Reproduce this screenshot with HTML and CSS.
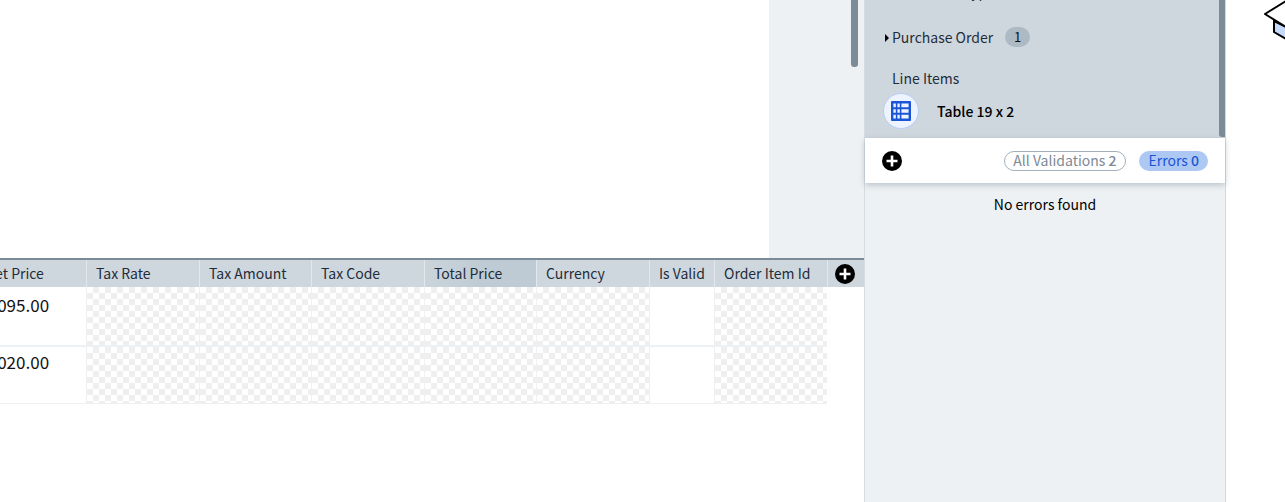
FILE: index.html
```html
<!DOCTYPE html>
<html lang="en">
<head>
    <meta charset="UTF-8">
    <title>Line Items</title>
    <link rel="stylesheet" href="styles.css">
</head>
<body>
    <div class="main">
        <div class="doc-area">
            <div class="doc-page"></div>
            <div class="doc-gutter">
                <div class="doc-thumb"></div>
            </div>
        </div>
        <div class="table-wrap">
            <div class="line-table">
                <div class="th th-first">Net Price</div>
                <div class="th">Tax Rate</div>
                <div class="th">Tax Amount</div>
                <div class="th">Tax Code</div>
                <div class="th sorted">Total Price</div>
                <div class="th">Currency</div>
                <div class="th">Is Valid</div>
                <div class="th">Order Item Id</div>
                <div class="th th-add">
                    <svg class="plus" viewBox="0 0 20 20"><circle cx="10" cy="10" r="10" fill="#000"/><path d="M10 4.5v11M4.5 10h11" stroke="#fff" stroke-width="2.6"/></svg>
                </div>

                <div class="td">1,095.00</div>
                <div class="td empty"></div>
                <div class="td empty"></div>
                <div class="td empty"></div>
                <div class="td empty"></div>
                <div class="td empty"></div>
                <div class="td"></div>
                <div class="td empty"></div>
                <div class="td-end"></div>

                <div class="td second">1,020.00</div>
                <div class="td empty second"></div>
                <div class="td empty second"></div>
                <div class="td empty second"></div>
                <div class="td empty second"></div>
                <div class="td empty second"></div>
                <div class="td second"></div>
                <div class="td empty second"></div>
                <div class="td-end"></div>
            </div>
        </div>
    </div>

    <div class="panel">
        <div class="fields">
            <div class="field-clipped">Document Type</div>
            <div class="group-row">
                <span class="caret"></span>
                <span class="group-name">Purchase Order</span>
                <span class="count">1</span>
            </div>
            <div class="field-label">Line Items</div>
            <div class="table-row">
                <span class="table-icon">
                    <svg viewBox="0 0 20 20" width="20" height="20">
                        <rect width="20" height="20" rx="1" fill="#1b55d6"/>
                        <path d="M2.4 2.6h2.4v3.6H2.4zM6.4 2.6h2.4v3.6H6.4zM10.4 2.6h7.2v3.6h-7.2zM2.4 8.2h2.4v3.6H2.4zM6.4 8.2h2.4v3.6H6.4zM10.4 8.2h7.2v3.6h-7.2zM2.4 13.8h2.4v3.6H2.4zM6.4 13.8h2.4v3.6H6.4zM10.4 13.8h7.2v3.6h-7.2z" fill="#eef4ff"/>
                    </svg>
                </span>
                <span class="table-name">Table 19 x 2</span>
            </div>
            <div class="fields-thumb"></div>
        </div>
        <div class="toolbar">
            <svg class="plus" viewBox="0 0 20 20"><circle cx="10" cy="10" r="10" fill="#000"/><path d="M10 4.5v11M4.5 10h11" stroke="#fff" stroke-width="2.6"/></svg>
            <div class="pills">
                <span class="pill pill-all">All Validations <b>2</b></span>
                <span class="pill pill-errors">Errors <b>0</b></span>
            </div>
        </div>
        <div class="no-errors">No errors found</div>
    </div>

    <div class="canvas">
        <svg class="cube" viewBox="0 0 22 40" width="22" height="40">
            <path d="M10 21v11l12 7V27z" fill="#c6dafc" stroke="#000" stroke-width="2"/>
            <path d="M1 14L22 1v26z" fill="#fff" stroke="#000" stroke-width="2"/>
        </svg>
    </div>
</body>
</html>
```

FILE: styles.css
```css
* {
    box-sizing: border-box;
}

html, body {
    height: 100%;
}

body {
    margin: 0;
    display: flex;
    overflow: hidden;
    background: #fff;
    color: #000;
    font-family: "Noto Sans CJK JP", "Noto Sans", sans-serif;
    font-size: 14px;
}

/* left part: document and table */
.main {
    width: 865px;
    flex: none;
    display: flex;
    flex-direction: column;
    border-right: 1px solid #d5dce2;
}

.doc-area {
    height: 258px;
    flex: none;
    display: flex;
}

.doc-page {
    flex: 1;
    background: #fff;
}

.doc-gutter {
    width: 95px;
    background: #edf1f4;
    display: flex;
    justify-content: flex-end;
    padding-right: 6px;
}

.doc-thumb {
    width: 7px;
    height: 67px;
    background: #7b8b98;
    border-radius: 0 0 3px 3px;
}

.table-wrap {
    flex: 1;
    overflow: hidden;
    border-top: 2px solid #7b8b98;
}

.line-table {
    display: grid;
    grid-template-columns: 113px 113px 112px 113px 112px 113px 65px 113px 37px;
    grid-template-rows: 27px 59px 58px;
    margin-left: -27px;
    width: 891px;
}

.th {
    background: #cfd7de;
    border-left: 1px solid #e3e8ec;
    color: #1f2d3a;
    padding-left: 9px;
    line-height: 26px;
    white-space: nowrap;
}

.th-first {
    padding-left: 11px;
}

.th.sorted {
    background: linear-gradient(to right, #cbd4db, #bfcbd4 50%);
}

.th-add {
    padding: 0 2px 0 0;
    display: flex;
    align-items: center;
    justify-content: center;
}

.td {
    background: #fff;
    border-left: 1px solid #edf1f4;
    border-bottom: 1px solid #edf1f4;
    color: #111;
    font-size: 17px;
    line-height: 24px;
    padding: 6px 0 0 9px;
    white-space: nowrap;
}

.td.second {
    border-top: 1px solid #edf1f4;
    padding-top: 3px;
}

/* checker tile for cells with no value */
.td.empty {
    background-image: repeating-conic-gradient(#efefef 0 25%, #fff 0 50%);
    background-size: 12px 12px;
}

.plus {
    width: 20px;
    height: 20px;
    display: block;
    flex: none;
}

/* right panel */
.panel {
    width: 361px;
    flex: none;
    display: flex;
    flex-direction: column;
    background: #edf1f4;
    border-right: 1px solid #d0d8de;
}

.fields {
    height: 138px;
    flex: none;
    background: #cfd7de;
    overflow: hidden;
    position: relative;
    padding: 0 0 0 18px;
    color: #1f2d3a;
}

.fields-thumb {
    position: absolute;
    top: 0;
    right: 0;
    width: 6px;
    height: 137px;
    background: #7b8b98;
    border-radius: 0 0 0 3px;
}

.field-clipped {
    height: 22px;
    margin-top: -20px;
    padding-left: 9px;
    line-height: 22px;
}

.group-row {
    display: flex;
    align-items: center;
    height: 24px;
    margin-top: 23px;
}

.caret {
    width: 0;
    height: 0;
    margin: 1px 3px 0 2px;
    border-left: 4px solid #000;
    border-top: 4px solid transparent;
    border-bottom: 4px solid transparent;
}

.group-name {
    line-height: 24px;
}

.count {
    margin-left: 12px;
    width: 25px;
    height: 20px;
    border-radius: 10px;
    background: #adb9c3;
    color: #111;
    font-size: 13px;
    line-height: 20px;
    text-align: center;
}

.field-label {
    margin-top: 17px;
    padding-left: 9px;
    line-height: 24px;
}

.table-row {
    display: flex;
    align-items: center;
    margin-top: 3px;
}

.table-icon {
    width: 36px;
    height: 36px;
    border-radius: 50%;
    background: #eef4ff;
    border: 1px solid #b4cdf6;
    display: flex;
    align-items: center;
    justify-content: center;
}

.table-name {
    margin-left: 18px;
    color: #000;
    font-weight: 500;
}

.toolbar {
    height: 45px;
    flex: none;
    background: #fff;
    box-shadow: 0 2px 6px rgba(90, 105, 118, .35);
    display: flex;
    align-items: center;
    justify-content: space-between;
    padding: 0 17px 0 17px;
    position: relative;
}

.pills {
    display: flex;
    gap: 13px;
}

.pill {
    height: 20px;
    border-radius: 10px;
    line-height: 16px;
    white-space: nowrap;
}

.pill b {
    font-weight: 500;
}

.pill-all {
    border: 1px solid #a3afba;
    color: #7d8a96;
    padding: 0 8px;
}

.pill-errors {
    background: #aec8f4;
    color: #1b55d6;
    padding: 1px 9px 0 10px;
}

.no-errors {
    text-align: center;
    line-height: 24px;
    padding-top: 9px;
}

/* right canvas with the clipped node */
.canvas {
    flex: 1;
    position: relative;
    overflow: hidden;
}

.cube {
    position: absolute;
    left: 38px;
    top: 0;
}
```
